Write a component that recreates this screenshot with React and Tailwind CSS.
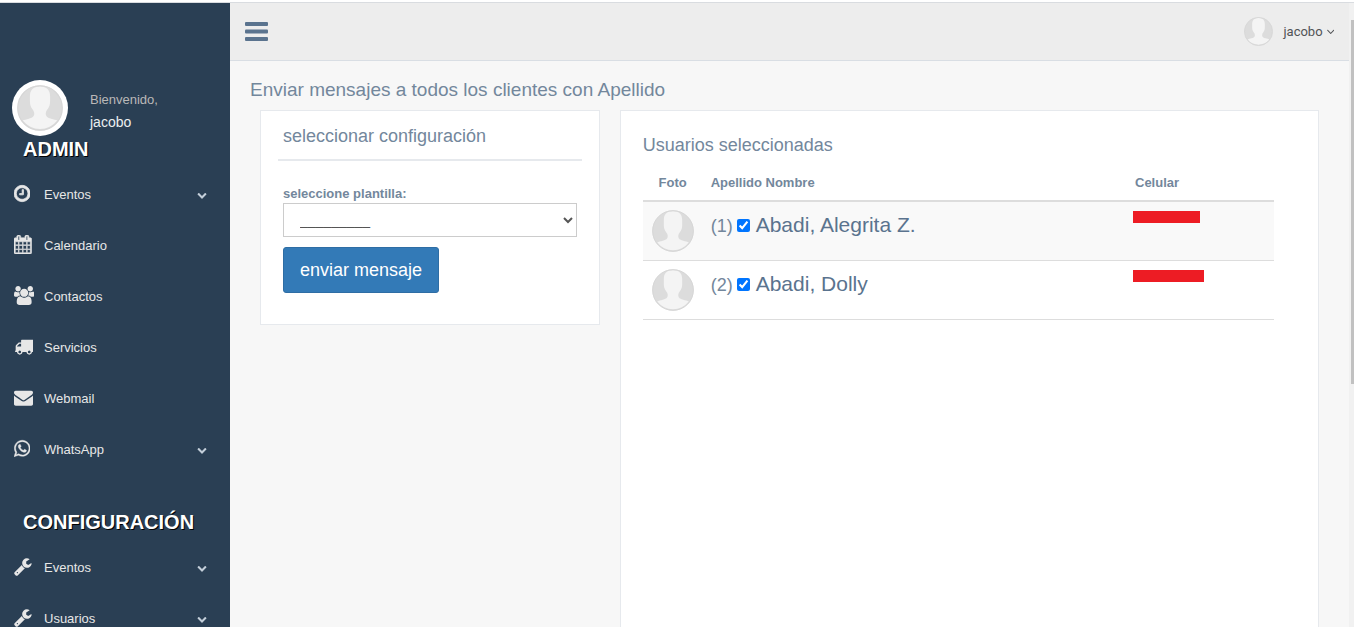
import React from "react";

const ICONS = {
  clock: {
    box: "128 0 1536 1792",
    weight: 70,
    d: "M1024 544v448q0 14-9 23t-23 9h-320q-14 0-23-9t-9-23v-64q0-14 9-23t23-9h224v-352q0-14 9-23t23-9h64q14 0 23 9t9 23zm416 352q0-148-73-273t-198-198-273-73-273 73-198 198-73 273 73 273 198 198 273 73 273-73 198-198 73-273zm224 0q0 209-103 385.5t-279.5 279.5-385.5 103-385.5-103-279.5-279.5-103-385.5 103-385.5 279.5-279.5 385.5-103 385.5 103 279.5 279.5 103 385.5z",
  },
  calendar: {
    box: "64 0 1664 1792",
    weight: 50,
    d: "M192 1664h288v-288h-288v288zm352 0h320v-288h-320v288zm-352-352h288v-320h-288v320zm352 0h320v-320h-320v320zm-352-384h288v-288h-288v288zm736 736h320v-288h-320v288zm-384-736h320v-288h-320v288zm768 736h288v-288h-288v288zm-384-352h320v-320h-320v320zm-352-864v-288q0-13-9.500-22.500t-22.500-9.500h-64q-13 0-22.500 9.500t-9.500 22.500v288q0 13 9.500 22.500t22.500 9.500h64q13 0 22.500-9.500t9.500-22.500zm736 864h288v-320h-288v320zm-384-384h320v-288h-320v288zm384 0h288v-288h-288v288zm32-480v-288q0-13-9.500-22.500t-22.500-9.500h-64q-13 0-22.500 9.500t-9.500 22.500v288q0 13 9.500 22.500t22.500 9.500h64q13 0 22.500-9.500t9.500-22.500zm384-64v1280q0 52-38 90t-90 38h-1408q-52 0-90-38t-38-90v-1280q0-52 38-90t90-38h128v-96q0-66 47-113t113-47h64q66 0 113 47t47 113v96h384v-96q0-66 47-113t113-47h64q66 0 113 47t47 113v96h128q52 0 90 38t38 90z",
  },
  users: {
    box: "-64 0 1920 1792",
    d: "M529 896q-162 5-265 128h-134q-82 0-138-40.5t-56-118.5q0-353 124-353 6 0 43.5 21t97.5 42.5 119 21.5q67 0 133-23-5 37-5 66 0 139 81 256zm1071 637q0 120-73 189.5t-194 69.5h-874q-121 0-194-69.5t-73-189.5q0-53 3.5-103.5t14-109 26.5-108.5 43-97.5 62-81 85.5-53.5 111.5-20q10 0 43 21.5t73 48 107 48 135 21.5 135-21.5 107-48 73-48 43-21.5q61 0 111.5 20t85.5 53.5 62 81 43 97.5 26.5 108.5 14 109 3.5 103.5zm-1024-1277q0 106-75 181t-181 75-181-75-75-181 75-181 181-75 181 75 75 181zm704 384q0 159-112.5 271.5t-271.5 112.5-271.5-112.5-112.5-271.5 112.5-271.5 271.5-112.5 271.5 112.5 112.5 271.5zm576 225q0 78-56 118.5t-138 40.5h-134q-103-123-265-128 81-117 81-256 0-29-5-66 66 23 133 23 59 0 119-21.5t97.5-42.5 43.5-21q124 0 124 353zm-128-609q0 106-75 181t-181 75-181-75-75-181 75-181 181-75 181 75 75 181z",
  },
  truck: {
    box: "-30 0 1822 1792",
    d: "M640 1408q0-52-38-90t-90-38-90 38-38 90 38 90 90 38 90-38 38-90zm-384-512h384v-256h-158q-13 0-22 9l-195 195q-9 9-9 22v30zm1280 512q0-52-38-90t-90-38-90 38-38 90 38 90 90 38 90-38 38-90zm256-1088v1024q0 15-4 26.5t-13.5 18.5-16.5 11.5-23.5 6-22.5 2-25.5 0-22.5-.5q0 106-75 181t-181 75-181-75-75-181h-384q0 106-75 181t-181 75-181-75-75-181h-64q-3 0-22.5.5t-25.5 0-22.5-2-23.5-6-16.5-11.5-13.5-18.5-4-26.500q0-26 19-45t45-19v-320q0-8-.5-35t0-38 2.500-34.500 6.500-37 14-30.500 22.500-30l198-198q19-19 50.500-32t58.500-13h160v-192q0-26 19-45t45-19h1024q26 0 45 19t19 45z",
  },
  envelope: {
    box: "0 0 1792 1792",
    d: "M1792 710v794q0 66-47 113t-113 47h-1472q-66 0-113-47t-47-113v-794q44 49 101 87 362 246 497 345 57 42 92.5 65.5t94.5 48 110 24.5h2q51 0 110-24.5t94.5-48 92.5-65.5q170-123 498-345 57-39 100-87zm0-294q0 79-49 151t-122 123q-376 261-468 325-10 7-42.5 31t-54 38.5-52 32.5-57.5 27-50 9h-2q-23 0-50-9t-57.5-27-52-32.5-54-38.5-42.5-31q-91-64-262-182.5t-205-142.5q-62-42-117-115.5t-55-136.5q0-78 41.5-130t118.5-52h1472q65 0 112.5 47t47.5 113z",
  },
  whatsapp: {
    box: "128 0 1536 1792",
    weight: 40,
    d: "M1113 974q13 0 97.5 44t89.5 53q2 5 2 15 0 33-17 76-16 39-71 65.5t-102 26.5q-57 0-190-62-98-45-170-118t-148-185q-72-107-71-194v-8q3-91 74-158 24-22 52-22 6 0 18 1.5t19 1.5q19 0 26.5 6.5t15.5 27.5q8 20 33 88t25 75q0 21-34.5 57.5t-34.5 46.5q0 7 5 15 34 73 102 137 56 53 151 101 12 7 22 7 15 0 54-48.5t52-48.5zm-203 530q127 0 243.5-50t200.5-134 134-200.5 50-243.5-50-243.5-134-200.5-200.5-134-243.5-50-243.5 50-200.5 134-134 200.5-50 243.5q0 203 120 368l-79 233 242-77q158 104 345 104zm0-1382q153 0 292.5 60t240.5 161 161 240.5 60 292.5-60 292.5-161 240.5-240.5 161-292.5 60q-195 0-365-94l-417 134 136-405q-108-178-108-389 0-153 60-292.5t161-240.5 240.5-161 292.5-60z",
  },
  wrench: {
    box: "64 0 1664 1792",
    d: "M448 1472q0-26-19-45t-45-19-45 19-19 45 19 45 45 19 45-19 19-45zm644-420l-682 682q-37 37-90 37-52 0-91-37l-106-108q-38-36-38-90 0-53 38-91l681-681q39 98 114.5 173.5t173.5 114.5zm634-435q0 39-23 106-47 134-164.5 217.5t-258.5 83.5q-185 0-316.5-131.5t-131.5-316.5 131.5-316.5 316.5-131.5q58 0 121.5 16.5t107.5 46.5q16 11 16 28t-16 28l-293 169v224l193 107q5-3 79-48.5t135.5-81 70.5-35.5q15 0 23.5 10t8.5 25z",
  },
  chevron: {
    box: "0 0 1792 1792",
    d: "M1683 808l-742 741q-19 19-45 19t-45-19l-742-741q-19-19-19-45.500t19-45.500l166-165q19-19 45-19t45 19l531 531 531-531q19-19 45-19t45 19l166 165q19 19 19 45.500t-19 45.500z",
  },
  angle: {
    box: "384 0 1024 1792",
    d: "M1395 736q0 13-10 23l-466 466q-10 10-23 10t-23-10l-466-466q-10-10-10-23t10-23l50-50q10-10 23-10t23 10l393 393 393-393q10-10 23-10t23 10l50 50q10 10 10 23z",
  },
};

function Icon({ name, className }) {
  const icon = ICONS[name];
  return (
    <svg
      viewBox={icon.box}
      className={className}
      fill="currentColor"
      stroke="currentColor"
      strokeWidth={icon.weight ?? 0}
      aria-hidden="true"
    >
      <path d={icon.d} />
    </svg>
  );
}

function Avatar({ className }) {
  return (
    <svg viewBox="0 0 128 128" className={className} aria-hidden="true">
      <circle cx="64" cy="64" r="63" fill="#dcdcdc" />
      <path
        fill="#f4f4f4"
        d="M64 4c19 0 28 10 28 27v15c0 8-2 15-6 20-4 5-6 9-6 14 0 8 6 11 15 14 7 2 13 3 17 5a61 61 0 0 1-96 0c4-2 10-3 17-5 9-3 15-6 15-14 0-5-2-9-6-14-4-5-6-12-6-20V31C36 14 45 4 64 4z"
      />
      <circle cx="64" cy="64" r="62" fill="none" stroke="#d6d6d6" strokeWidth="3" />
    </svg>
  );
}

const adminItems = [
  { label: "Eventos", icon: "clock", more: true },
  { label: "Calendario", icon: "calendar" },
  { label: "Contactos", icon: "users" },
  { label: "Servicios", icon: "truck" },
  { label: "Webmail", icon: "envelope" },
  { label: "WhatsApp", icon: "whatsapp", more: true },
];

const configItems = [
  { label: "Eventos", icon: "wrench", more: true },
  { label: "Usuarios", icon: "wrench", more: true },
];

const clients = [
  { id: 1, name: "Abadi, Alegrita Z.", bar: "w-[67px]" },
  { id: 2, name: "Abadi, Dolly", bar: "w-[71px]" },
];

function MenuSection({ title, items }) {
  return (
    <section>
      <h3 className="pl-[23px] text-xl leading-5 font-bold text-white uppercase [text-shadow:1px_1px_#000]">
        {title}
      </h3>
      <ul className="mt-[10px]">
        {items.map((item) => (
          <li key={item.label}>
            <a href="#" className="flex h-[51px] items-center pr-[23px] pl-[14px] text-[#e7e7e7]">
              <span className="w-[30px] shrink-0 pb-[3px]">
                <Icon name={item.icon} className="h-[19px] w-auto" />
              </span>
              <span className="flex-1">{item.label}</span>
              {item.more && <Icon name="chevron" className="size-[10px] text-[#c4cfda]" />}
            </a>
          </li>
        ))}
      </ul>
    </section>
  );
}

function Sidebar() {
  return (
    <aside className="w-[230px] shrink-0 overflow-hidden bg-[#2a3f54] pt-[77px]">
      <div className="flex items-center pl-3">
        <div className="size-14 shrink-0 rounded-full bg-white p-[5px]">
          <Avatar className="size-full" />
        </div>
        <div className="pt-[6px] pl-[22px]">
          <p className="leading-[22px] text-[#bab8b8]">Bienvenido,</p>
          <p className="text-sm leading-[22px] text-[#ecf0f1]">jacobo</p>
        </div>
      </div>
      <nav className="flex flex-col gap-[37px] pt-[3px]">
        <MenuSection title="Admin" items={adminItems} />
        <MenuSection title="Configuración" items={configItems} />
      </nav>
    </aside>
  );
}

function TopBar() {
  return (
    <header className="flex h-[58px] shrink-0 items-center justify-between border-b border-[#d9dee4] bg-[#ededed] px-[15px]">
      <button type="button" aria-label="Menú" className="text-[#5a738e]">
        <svg viewBox="0 0 23 19" className="h-[19px] w-[23px]" fill="currentColor" aria-hidden="true">
          <rect width="23" height="4" rx="1" />
          <rect y="7.500" width="23" height="4" rx="1" />
          <rect y="15" width="23" height="4" rx="1" />
        </svg>
      </button>
      <button type="button" className="flex items-center font-[Roboto,sans-serif] text-[#515356]">
        <Avatar className="mr-[10px] size-[29px]" />
        jacobo
        <Icon name="angle" className="ml-1 h-[13px] w-auto" />
      </button>
    </header>
  );
}

function SettingsCard() {
  return (
    <section className="border border-[#e6e9ed] bg-white px-[17px] pb-[31px]">
      <h2 className="border-b-2 border-[#e6e9ed] px-[5px] pt-[14px] pb-3 text-lg leading-[22px]">
        seleccionar configuración
      </h2>
      <form className="px-[5px] pt-6" onSubmit={(e) => e.preventDefault()}>
        <label htmlFor="plantilla" className="block leading-[18px] font-bold">
          seleccione plantilla:
        </label>
        <select
          id="plantilla"
          className="block h-[34px] w-full border border-[#ccc] bg-white px-3 text-sm text-[#555]"
        >
          <option>_________</option>
        </select>
        <button
          type="submit"
          className="mt-[10px] h-[46px] rounded-[3px] border border-[#2e6da4] bg-[#337ab7] px-4 text-lg text-white"
        >
          enviar mensaje
        </button>
      </form>
    </section>
  );
}

function ClientsCard() {
  return (
    <section className="h-screen border border-[#e6e9ed] bg-white pt-[23px] pr-11 pl-[22px]">
      <h2 className="text-lg leading-[22px]">Usuarios seleccionadas</h2>
      <table className="mt-2 w-full table-fixed border-separate border-spacing-0 text-left">
        <thead>
          <tr className="h-[38px]">
            <th className="w-[60px] border-b-2 border-[#ddd] pt-[2px] text-center">Foto</th>
            <th className="border-b-2 border-[#ddd] px-2 pt-[2px]">Apellido Nombre</th>
            <th className="w-[147px] border-b-2 border-[#ddd] px-2 pt-[2px]">Celular</th>
          </tr>
        </thead>
        <tbody>
          {clients.map((c) => (
            <tr key={c.id} className="h-[59px] align-top odd:bg-[#f9f9f9]">
              <td className="border-b border-[#ddd] px-[9px] pt-2">
                <Avatar className="size-[42px]" />
              </td>
              <td className="border-b border-[#ddd] px-2 pt-2">
                <label className="flex items-baseline text-lg leading-[30px]">
                  ({c.id})
                  <input type="checkbox" defaultChecked className="mr-[6px] ml-1 size-[13px] self-center" />
                  <span className="text-[21px] leading-[30px] text-[#5a738e]">{c.name}</span>
                </label>
              </td>
              <td className="border-b border-[#ddd] px-[6px] pt-[9px]">
                <div className={`h-3 bg-[#ed1c24] ${c.bar}`} />
              </td>
            </tr>
          ))}
        </tbody>
      </table>
    </section>
  );
}

export default function App() {
  return (
    <div className="flex h-screen flex-col overflow-hidden bg-white pt-[2px] font-['Liberation_Sans',Arial,sans-serif] text-[13px] leading-[18px] text-[#73879c]">
      <div className="flex min-h-0 flex-1 border-t border-[#d9dce0]">
        <Sidebar />
        <div className="flex min-w-0 flex-1 flex-col bg-[#f7f7f7]">
          <TopBar />
          <main className="min-h-0 flex-1 overflow-hidden px-[30px] pt-[17px]">
            <h1 className="-ml-[10px] text-[19px] leading-6">
              Enviar mensajes a todos los clientes con Apellido
            </h1>
            <div className="mt-2 grid grid-cols-3 items-start gap-5">
              <SettingsCard />
              <div className="col-span-2">
                <ClientsCard />
              </div>
            </div>
          </main>
        </div>
        <div className="flex w-[5px] shrink-0 flex-col items-end bg-[#f1f1f1] pt-[17px]" aria-hidden="true">
          <div className="h-3/5 w-[3px] bg-[#c1c1c1]" />
        </div>
      </div>
    </div>
  );
}
